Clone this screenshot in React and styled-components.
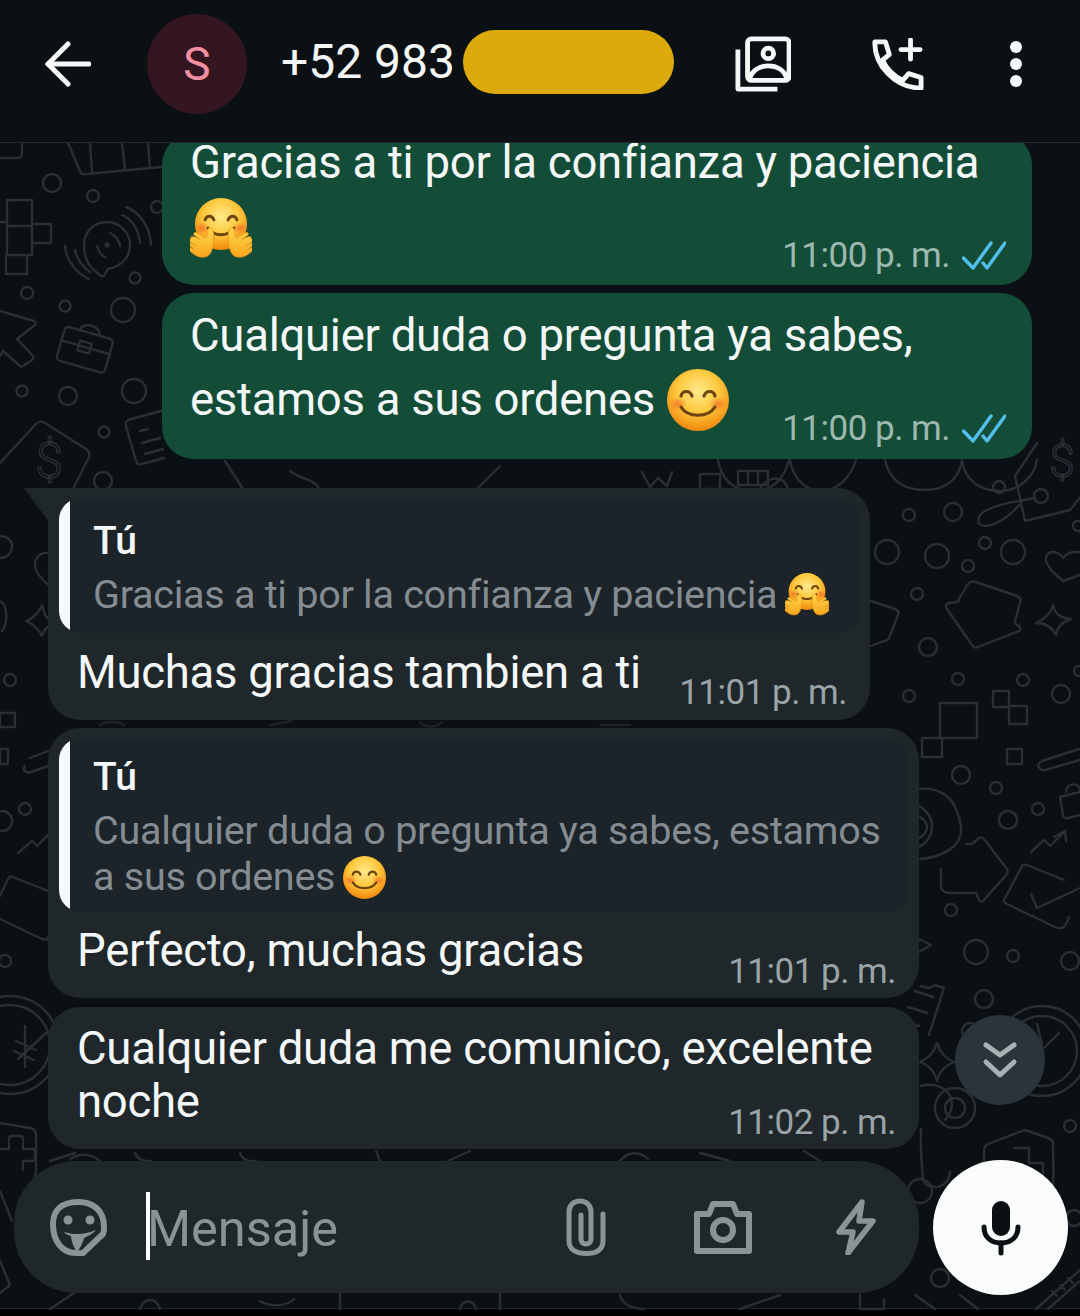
import React from "react";
import styled, { createGlobalStyle } from "styled-components";

const Global = createGlobalStyle`
  html, body { margin: 0; padding: 0; background: #000; }
  body { font-family: Roboto, "Liberation Sans", sans-serif; }
  * { box-sizing: border-box; }
`;

const Page = styled.div`
  width: 1080px;
  height: 1316px;
  display: flex;
  flex-direction: column;
  overflow: hidden;
  background: #0b1014;
`;

const Header = styled.header`
  position: relative;
  z-index: 2;
  flex: 0 0 143px;
  height: 143px;
  padding: 0 48px 14px 45px;
  display: flex;
  align-items: center;
  background: #0b1014;
  border-bottom: 1px solid #22282c;
`;

const Avatar = styled.div`
  width: 100px;
  height: 100px;
  margin-left: 56px;
  border-radius: 50%;
  background: #33161f;
  color: #f48fa3;
  font-size: 46px;
  display: flex;
  align-items: center;
  justify-content: center;
`;

const Phone = styled.div`
  margin-left: 34px;
  margin-top: -4px;
  color: #f4f6f6;
  font-size: 48px;
  font-weight: 400;
  line-height: 1;
`;

const Redact = styled.div`
  width: 211px;
  height: 64px;
  margin-left: 8px;
  margin-top: -4px;
  border-radius: 32px;
  background: #dcaa0c;
`;

const HeaderIcon = styled.svg`
  display: block;
  flex: none;
  margin-left: ${(p) => p.$left || 0}px;
`;

const Chat = styled.main`
  position: relative;
  flex: 1;
  min-height: 0;
  display: flex;
  flex-direction: column;
  justify-content: flex-end;
`;

const Doodles = styled.svg`
  position: absolute;
  inset: 0;
  width: 1080px;
  height: 1173px;
  fill: none;
  stroke: #2a2f33;
  stroke-width: 2.4;
  stroke-linecap: round;
  stroke-linejoin: round;
`;

const Messages = styled.div`
  position: relative;
  display: flex;
  flex-direction: column;
  flex: none;
`;

const Bubble = styled.div`
  position: relative;
  flex: none;
  width: ${(p) => p.$width}px;
  margin-top: ${(p) => p.$gap || 0}px;
  align-self: ${(p) => (p.$out ? "flex-end" : "flex-start")};
  margin-right: ${(p) => (p.$out ? 48 : 0)}px;
  margin-left: ${(p) => (p.$out ? 0 : 48)}px;
  padding: ${(p) => p.$pad || "10px 10px 0 11px"};
  border-radius: 32px;
  background: ${(p) => (p.$out ? "#134d37" : "#1f272a")};
  color: #f4f7f7;
  ${(p) => p.$tail && "border-top-left-radius: 0;"}
  &::before {
    content: ${(p) => (p.$tail ? '""' : "none")};
    position: absolute;
    top: 0;
    left: -24px;
    width: 25px;
    height: 34px;
    background: #1f272a;
    clip-path: polygon(0 0, 100% 0, 100% 100%);
  }
`;

const Stack = styled.div`
  display: grid;
`;

const Body = styled.div`
  grid-area: 1 / 1;
  font-size: 45.5px;
  line-height: ${(p) => p.$line || 53}px;
  letter-spacing: -0.27px;
  padding: ${(p) => p.$pad || "0"};
  min-height: ${(p) => p.$min || 0}px;
`;

const Line = styled.div`
  white-space: nowrap;
  height: ${(p) => (p.$height ? `${p.$height}px` : "auto")};
  display: flex;
  align-items: center;
  gap: 12px;
`;

const Meta = styled.div`
  grid-area: 1 / 1;
  justify-self: end;
  align-self: end;
  display: flex;
  align-items: center;
  gap: 12px;
  color: ${(p) => (p.$out ? "#9db8ae" : "#9aa3a6")};
  font-size: 35px;
  letter-spacing: -0.5px;
  line-height: 40px;
  white-space: nowrap;
  margin: ${(p) => p.$margin || "0"};
`;

const Quote = styled.div`
  position: relative;
  height: ${(p) => p.$height}px;
  padding: ${(p) => p.$top}px 24px 0 34px;
  border-radius: 22px;
  background: #1c2329;
  overflow: hidden;
  &::before {
    content: "";
    position: absolute;
    left: 0;
    top: 0;
    bottom: 0;
    width: 11px;
    background: #f8f9fa;
  }
`;

const QuoteName = styled.div`
  color: #f4f7f7;
  font-size: 39px;
  font-weight: 500;
  line-height: 46px;
  margin-bottom: 8px;
`;

const QuoteText = styled.div`
  color: #848c92;
  font-size: 39.6px;
  letter-spacing: -0.29px;
  line-height: 46px;
  display: flex;
  align-items: center;
  gap: 8px;
  white-space: nowrap;
`;

const Footer = styled.div`
  position: relative;
  flex: none;
  height: 159px;
  padding: 11px 12px 0 14px;
  display: flex;
  align-items: flex-start;
  justify-content: space-between;
`;

const Composer = styled.div`
  width: 905px;
  height: 132px;
  margin-top: 1px;
  padding: 0 43px 0 36px;
  border-radius: 62px;
  background: #1f272a;
  display: flex;
  align-items: center;
`;

const Caret = styled.div`
  width: 4px;
  height: 68px;
  margin-left: 39px;
  margin-top: -2px;
  background: #fff;
`;

const Placeholder = styled.div`
  margin-left: -3px;
  color: #8a9497;
  font-size: 50.5px;
  line-height: 1;
  margin-top: 4px;
`;

const MicButton = styled.button`
  width: 135px;
  height: 135px;
  padding: 0;
  border: 0;
  border-radius: 50%;
  background: #fafbfb;
  display: flex;
  align-items: center;
  justify-content: center;
`;

const ScrollDown = styled.button`
  position: absolute;
  left: 955px;
  top: 872px;
  width: 90px;
  height: 90px;
  padding: 0;
  border: 0;
  border-radius: 50%;
  background: #2a343a;
  display: flex;
  align-items: center;
  justify-content: center;
`;

const BottomBar = styled.div`
  flex: 0 0 8px;
  background: #000;
  border-top: 1px solid #22282c;
`;

function BackIcon() {
  return (
    <HeaderIcon width="46" height="46" viewBox="0 0 46 46" fill="none" stroke="#f6f7f7" strokeWidth="5" strokeLinecap="round" strokeLinejoin="round">
      <path d="M3 23h41" />
      <path d="M23 3 3 23l20 20" />
    </HeaderIcon>
  );
}

function ContactsIcon() {
  return (
    <HeaderIcon $left={61} width="56" height="56" viewBox="0 0 58 58" fill="none" stroke="#f6f7f7" strokeWidth="5" strokeLinecap="round" strokeLinejoin="round">
      <rect x="13" y="3" width="43" height="43" rx="4" />
      <circle cx="34.5" cy="18" r="5.5" />
      <path d="M15 44c3-9 11-13 19.500-13S51 35 54 44" />
      <path d="M3 14v41h41" strokeLinecap="butt" strokeLinejoin="round" />
    </HeaderIcon>
  );
}

function CallAddIcon() {
  return (
    <HeaderIcon $left={81} width="52" height="52" viewBox="0 0 54 54" fill="none" stroke="#f6f7f7" strokeWidth="5" strokeLinecap="round" strokeLinejoin="round">
      <path d="M3 4h11l4 13-7 6c4 9 11 16 21 21l6-7 13 4v11C24 52 2 28 3 4Z" />
      <path d="M40 2v20M30 12h20" />
    </HeaderIcon>
  );
}

function DotsIcon() {
  return (
    <HeaderIcon $left={84} width="16" height="48" viewBox="0 0 16 48" fill="#f6f7f7">
      <circle cx="8" cy="7" r="6" />
      <circle cx="8" cy="24" r="6" />
      <circle cx="8" cy="41" r="6" />
    </HeaderIcon>
  );
}

function Ticks() {
  return (
    <svg width="44" height="30" viewBox="0 0 44 30" fill="none" stroke="#53bdeb" strokeWidth="3.4" strokeLinecap="round" strokeLinejoin="round">
      <path d="M1.500 17 11 27 29 2" />
      <path d="M21 22l4 5L43 2" />
    </svg>
  );
}

function EmojiDefs() {
  return (
    <defs>
      <radialGradient id="face" cx="50%" cy="36%" r="62%">
        <stop offset="0" stopColor="#ffe98c" />
        <stop offset="0.55" stopColor="#fdc83c" />
        <stop offset="1" stopColor="#f28c10" />
      </radialGradient>
      <radialGradient id="cheek" cx="50%" cy="50%" r="50%">
        <stop offset="0" stopColor="#f4622a" stopOpacity="0.7" />
        <stop offset="1" stopColor="#f4622a" stopOpacity="0" />
      </radialGradient>
      <linearGradient id="hand" x1="0" y1="0" x2="0" y2="1">
        <stop offset="0" stopColor="#ffd84e" />
        <stop offset="1" stopColor="#f9a51c" />
      </linearGradient>
    </defs>
  );
}

function SmileEmoji({ size }) {
  return (
    <svg width={size} height={size} viewBox="0 0 62 62" style={{ flex: "none" }}>
      <EmojiDefs />
      <circle cx="31" cy="31" r="31" fill="url(#face)" />
      <ellipse cx="11" cy="35" rx="9" ry="7" fill="url(#cheek)" />
      <ellipse cx="51" cy="35" rx="9" ry="7" fill="url(#cheek)" />
      <g fill="none" stroke="#6d4412" strokeWidth="3.200" strokeLinecap="round">
        <path d="M14 27c1.500-6 9-6 11 0" />
        <path d="M37 27c2-6 9.500-6 11 0" />
        <path d="M14 38c7 11 27 11 34 0" />
      </g>
    </svg>
  );
}

function HugEmoji({ size }) {
  return (
    <svg width={size} height={size} viewBox="0 0 62 62" style={{ flex: "none" }}>
      <EmojiDefs />
      <ellipse cx="31" cy="26" rx="26" ry="26" fill="url(#face)" />
      <ellipse cx="12" cy="30" rx="8" ry="6" fill="url(#cheek)" />
      <ellipse cx="50" cy="30" rx="8" ry="6" fill="url(#cheek)" />
      <g fill="none" stroke="#6d4412" strokeWidth="2.800" strokeLinecap="round">
        <path d="M15 22c1.500-5 7-5 9 0" />
        <path d="M38 22c2-5 7.500-5 9 0" />
        <path d="M18 30c6 9 20 9 26 0" />
      </g>
      <g fill="url(#hand)" stroke="#ee9a1c" strokeWidth="0.800">
        <path d="M1 39c3-1 6 1 9 2l-6-4c-1-2 1-3 3-2l8 5c2 0 3-5 3-9 1-2 4-1 5 1 1 4 1 10 0 15-1 7-4 12-9 12-6 1-11-3-15-7-1-2 1-3 3-2l3 2-6-5c-1-2 1-3 2-2l5 3-7-5c-1-2 0-3 2-2Z" />
        <path d="M61 39c-3-1-6 1-9 2l6-4c1-2-1-3-3-2l-8 5c-2 0-3-5-3-9-1-2-4-1-5 1-1 4-1 10 0 15 1 7 4 12 9 12 6 1 11-3 15-7 1-2-1-3-3-2l-3 2 6-5c1-2-1-3-2-2l-5 3 7-5c1-2 0-3-2-2Z" />
      </g>
    </svg>
  );
}

function StickerIcon() {
  return (
    <svg width="57" height="57" viewBox="0 0 57 57" fill="none" stroke="#8a9497" strokeWidth="6" strokeLinejoin="round" strokeLinecap="round" style={{ flex: "none" }}>
      <path d="M3 25C3 11 12 3 28 3s26 9 26 25c0 3-.5 6-1 7L33 54c-2 .5-4 0-7 0C12 54 3 42 3 25Z" />
      <path d="M14 33c9 3 21 3 32-2-2 3-8 6-12 8-1 4-4 11-7 14-4-5-6-13-6-16-3-1-6-2-7-4Z" fill="#8a9497" stroke="none" />
      <circle cx="18" cy="21" r="4.500" fill="#8a9497" stroke="none" />
      <circle cx="40" cy="21" r="4.500" fill="#8a9497" stroke="none" />
    </svg>
  );
}

function ClipIcon() {
  return (
    <svg width="40" height="58" viewBox="0 0 40 58" fill="none" stroke="#8a9497" strokeWidth="5" strokeLinecap="round" style={{ flex: "none", marginLeft: "auto" }}>
      <path d="M37 16v27c0 9-7 12.500-16.500 12.500S3 52 3 43V14C3 7 8 3 14 3s11 4 11 11v27c0 3-2 5-5 5s-5-2-5-5V17" />
    </svg>
  );
}

function CameraIcon() {
  return (
    <svg width="58" height="54" viewBox="0 0 58 54" fill="none" stroke="#8a9497" strokeWidth="6" strokeLinejoin="round" style={{ flex: "none", marginLeft: 88 }}>
      <path d="M3 14h12l4-10h20l4 10h12v37H3Z" />
      <circle cx="29" cy="30" r="10" />
    </svg>
  );
}

function BoltIcon() {
  return (
    <svg width="40" height="56" viewBox="0 0 40 56" fill="none" stroke="#8a9497" strokeWidth="5.500" strokeLinejoin="round" style={{ flex: "none", marginLeft: 84 }}>
      <path d="M26 3 3 33h14l-5 21 25-32H23Z" />
    </svg>
  );
}

function MicIcon() {
  return (
    <svg width="40" height="56" viewBox="0 0 40 56" fill="none" stroke="#0b1014" strokeWidth="5" strokeLinecap="round">
      <rect x="11" y="1" width="18" height="35" rx="9" fill="#0b1014" stroke="none" />
      <path d="M3 27c0 10 7 16 17 16s17-6 17-16" />
      <path d="M20 43v10" />
    </svg>
  );
}

function ChevronsIcon() {
  return (
    <svg width="36" height="38" viewBox="0 0 36 38" fill="none" stroke="#a7b0b2" strokeWidth="5" strokeLinecap="round" strokeLinejoin="round">
      <path d="M4 4l14 10L32 4" />
      <path d="M4 21l14 13 14-13" />
    </svg>
  );
}

const rings = [
  [52, 182, 9], [93, 195, 6], [157, 206, 6], [27, 292, 6], [65, 305, 5.5], [123, 309, 12], [135, 277, 5.5],
  [22, 390, 5.5], [68, 395, 9], [134, 390, 12], [104, 431, 5.5], [103, 480, 9], [999, 486, 6], [909, 514, 6],
  [953, 511, 9], [887, 551, 12], [937, 555, 12], [985, 542, 6], [968, 565, 6], [1013, 551, 12], [917, 593, 6],
  [928, 646, 9], [958, 678, 6], [1023, 679, 6], [1061, 693, 9], [909, 695, 6], [961, 774, 9], [996, 787, 6],
  [1038, 808, 6], [1008, 819, 9], [951, 909, 6], [976, 951, 12], [1013, 955, 6], [1070, 960, 9], [984, 998, 9],
  [970, 1030, 8], [1070, 1125, 6], [920, 1190, 12], [1074, 1217, 8], [940, 1277, 9], [25, 808, 6], [10, 679, 6],
  [1078, 525, 5], [955, 1107, 20], [955, 1107, 10], [2, 820, 10], [5, 960, 6], [1079, 670, 5],
];

function ChatDoodles() {
  return (
    <Doodles viewBox="0 142 1080 1173">
      {rings.map(([cx, cy, r], i) => (
        <circle key={i} cx={cx} cy={cy} r={r} />
      ))}
      {/* top left tiles */}
      <path d="M0 157h18c3 0 4-2 4-5v-10M68 142l12 28c1 3 3 4 6 3l75-7M92 172l-2-30M125 168l-3-26M150 166l-2-24" />
      <path d="M7 199h25v26H7zM7 225h25v29H7zM32 223h19v19H32zM6 254h21v19H6zM0 221h7" />
      {/* chat bubble with waves */}
      <path d="M101 275c-5-5-17-10-17-31 0-13 10-23 23-23s23 11 23 23c0 15-12 22-22 24l-4 7Z" />
      <path d="M97 245c2 7 5 10 8 11M110 232c4 2 9 6 10 13" />
      <circle cx="107" cy="244" r="1.500" />
      <path d="M65 245c1 14 12 28 24 33M75 249c2 9 8 17 15 22M126 206c14 5 24 20 25 38M122 214c10 4 17 15 18 28" />
      {/* cursor */}
      <path d="M0 310l34 10c2 1 2 3 1 4L17 338l16 17c1 1 0 3-1 4l-9 6c-1 1-2 1-3 0L3 350l-3 5" />
      {/* briefcase */}
      <g transform="rotate(16 84 348)">
        <rect x="60" y="331" width="50" height="35" rx="4" />
        <path d="M75 331c0-10 20-10 20 0M60 346h50" />
        <rect x="78" y="341" width="12" height="10" />
      </g>
      {/* dollar card */}
      <path d="M0 462l36-39c3-3 6-3 9-1l41 26c3 2 4 5 3 8l-17 34" />
      <text x="49" y="477" fontFamily="Roboto, sans-serif" fontSize="50" fontWeight="300" textAnchor="middle" fill="none" stroke="#2a2f33" strokeWidth="1.500">$</text>
      <text x="1062" y="476" fontFamily="Roboto, sans-serif" fontSize="46" fontWeight="300" textAnchor="middle" fill="none" stroke="#2a2f33" strokeWidth="1.500">$</text>
      {/* receipt */}
      <path d="M165 409l-34 9c-4 1-6 3-5 7l10 35c1 3 3 4 6 3l22-6M140 430l8-2M142 442l18-5M145 453l18-5" />
      {/* tag and loop */}
      <path d="M1037 442l-22 33 10 45 45-11 12-15M1035 497c-15 3-35 5-48 12-9 4-11 12-6 15 8 4 27-6 38-20M1041 495m-7 0a7 7 0 1 0 14 0a7 7 0 1 0-14 0" />
      {/* heart and sparkle */}
      <path d="M1063 580c-9-8-15-13-17-20-1-5 2-9 7-9 4 0 8 3 10 6 2-3 7-6 11-6h6M1080 574l-17 6" />
      <path d="M48 552c-6-1-12 3-13 10-1 6 3 12 13 22" />
      <path d="M12 545c0-6-5-10-12-10M0 557c7 0 12-5 12-12" />
      <path d="M1053 604c2 9 7 13 18 14-9 3-14 8-15 16-4-8-11-12-20-12 9-4 15-9 17-18Z" />
      <path d="M42 604c2 9 4 12 6 14M48 626c-3 2-5 5-6 9-3-6-8-12-16-15 8-3 13-9 16-16" />
      <path d="M0 600c8 4 8 22 2 30" />
      {/* mitten */}
      <path d="M968 583c2-2 5-3 8-2l41 14c3 1 4 4 3 7l-5 18c-1 3 2 4 4 5 2 2 2 4 0 5l-41 16c-3 1-5 0-6-2l-25-36c-2-3-1-5 2-6l7-1c2 0 3-1 3-3Z" />
      {/* small tag behind bubble */}
      <path d="M871 600l24 8c3 1 4 3 3 6l-9 23c-1 2-3 3-5 3l-13 5" />
      {/* squares */}
      <path d="M940 702h37v35h-37zM922 737h20v19h-20zM993 690h16v16h-16zM1009 705h18v18h-18zM1007 748h15v15h-15z" />
      <path d="M0 712h15v14H0zM0 748h8v15H0z" />
      {/* pill and lock */}
      <path d="M1079 748l-37 12c-7 3-3 10 3 9l35-10M25 765c-3 3 0 8 6 6l17-6M48 750l-18 7" />
      <path d="M1066 791c0-10 14-10 14-1M1060 796l20-5M1060 796l3 18c0 3 3 4 5 3l12-3" />
      {/* trend */}
      <path d="M1031 851l13-12 6 6 15-15M1054 836l11-6 1 10M18 852l14-12 5 5 12-12" />
      {/* envelope */}
      <path d="M1064 879l-37-15c-3-1-5 0-6 3l-16 30c-2 3-1 5 2 6l48 23c5 2 9 1 11-3l3-7M1031 893l6 14 43-20M0 895l8-17c1-2 3-3 5-2l35 14M0 918l42 20c3 1 6 1 6-2" />
      {/* ear */}
      <path d="M920 788c15-2 29 5 35 18 4 8 6 17 6 24 0 15-18 26-41 28M919 805c8 4 13 12 13 20s-4 16-13 21M919 815c6 4 8 7 8 11s-2 8-8 11" />
      {/* house arrow */}
      <path d="M966 843h6l7-6c2-1 3-1 5 1l23 30c1 2 1 3 0 5l-24 27c-1 1-3 1-4-1l-3-7h-26c-6 0-9-3-9-8v-16" />
      {/* ticket behind last bubble */}
      <path d="M921 985l8 2 6-3 9 3-15 47M915 990l18 6M908 1006l19 6M905 1020l14 5" />
      {/* small triangle */}
      <path d="M919 938l12 6-12 7" />
      {/* star */}
      <path d="M937 1042c3 9 7 14 17 19-10 4-14 9-17 19-3-10-7-15-17-19 10-5 14-10 17-19Z" />
      {/* clock */}
      <circle cx="1042" cy="1050" r="45" />
      <circle cx="1042" cy="1050" r="35" />
      <path d="M1037 1023l5 20M1059 1032l-15 15" />
      {/* coin */}
      <circle cx="10" cy="1044" r="49" />
      <circle cx="10" cy="1044" r="40" />
      <path d="M25 1025v41M46 1032l-28 26M16 1040l20 9M14 1050l20 9" />
      {/* ear ring bottom */}
      <path d="M921 1085c10-3 25 0 29 10 3 8 3 15-5 24M921 1128c-1 18 1 39 2 50 1 5 6 8 13 8s13-6 14-15" />
      {/* shield and plus */}
      <path d="M984 1192v-43c0-3 2-5 4-6l34-13c2-1 4-1 6 0l20 7c3 1 5 3 5 6 0 20 2 38-2 58" />
      <path d="M1014 1147h15v15h14v14h-14" />
      <path d="M0 1122l30 5c4 1 6 3 6 6v31c0 9-1 18-4 26" />
      <path d="M0 1148h9v-10c0-2 1-3 3-3h8c2 0 3 1 3 3v10h9c2 0 3 1 3 3v6c0 2-1 3-3 3h-9v9" />
      {/* ruler */}
      <path d="M1036 1308l44-39M1048 1308l32-28M1052 1290l5 5M1060 1284l5 5M1068 1277l5 5M0 1190l12 30M0 1260l10 24-10 8" />
      {/* bits between bubbles */}
      <path d="M885 459c5 22 20 30 40 30s34-10 37-30M962 459c3 22 20 31 38 31s34-13 37-31" />
      <path d="M718 459c4 22 18 31 35 31s30-8 36-31M790 459c4 22 18 31 32 31s28-12 34-31" />
      <path d="M738 470h30v14h-30zM748 470v14M758 470v14" />
      <path d="M642 471l8 15 8-9 9 8 5-14M700 488v-15h20v15M725 488h-28M760 488c8-14 24-14 28 0" />
      <path d="M290 470c10 8 24 8 30 18M500 465l-24 24M225 460l18 28" />
      <path d="M270 724l22-4M600 724h30M420 721c4 6 16 6 22 0M100 724c6-4 18-4 24 0" opacity="0.6" />
      <path d="M50 1160l25-8M70 1158c10-6 20-6 30 2M135 1152c2 6 10 9 16 8M240 1152c2 6 8 9 16 8M380 1160l-4-10M470 1150l-22 10M620 1160c8-10 20-10 28-2M700 1152l30 8M820 1160l-16-10" />
      <path d="M50 1308l24-16M140 1308c4-12 16-12 20 0M260 1300c10 6 26 6 34-2M340 1308v-16M460 1308c2-10 14-10 16 0M500 1292v16M620 1294c2 10 14 14 24 14M780 1294l-40 14M860 1294v14h24v-10M915 1294l20 14M960 1294l18 14" />
    </Doodles>
  );
}

export default function App() {
  return (
    <Page>
      <Global />
      <Header>
        <BackIcon />
        <Avatar>S</Avatar>
        <Phone>+52 983</Phone>
        <Redact />
        <ContactsIcon />
        <CallAddIcon />
        <DotsIcon />
      </Header>
      <Chat>
        <ChatDoodles />
        <Messages>
          <Bubble $out $width={870} $pad="10px 26px 10px 28px">
            <Stack>
              <Body $line={40}>
                <Line>Gracias a ti por la confianza y paciencia</Line>
                <Line $height={92}><HugEmoji size={62} /></Line>
              </Body>
              <Meta $out $margin="0 0 -1px 0">11:00 p. m. <Ticks /></Meta>
            </Stack>
          </Bubble>
          <Bubble $out $width={870} $gap={8} $pad="11px 26px 27px 28px">
            <Stack>
              <Body $line={64}>
                <Line>Cualquier duda o pregunta ya sabes,</Line>
                <Line>estamos a sus ordenes <SmileEmoji size={62} /></Line>
              </Body>
              <Meta $out $margin="0 0 -17px 0">11:00 p. m. <Ticks /></Meta>
            </Stack>
          </Bubble>
          <Bubble $tail $width={822} $gap={29}>
            <Quote $height={135} $top={20}>
              <QuoteName>Tú</QuoteName>
              <QuoteText>Gracias a ti por la confianza y paciencia <HugEmoji size={44} /></QuoteText>
            </Quote>
            <Stack>
              <Body $line={53} $pad="13px 0 0 18px" $min={87}>Muchas gracias tambien a ti</Body>
              <Meta $margin="0 13px 7px 0">11:01 p. m.</Meta>
            </Stack>
          </Bubble>
          <Bubble $width={871} $gap={8}>
            <Quote $height={174} $top={16}>
              <QuoteName>Tú</QuoteName>
              <QuoteText>Cualquier duda o pregunta ya sabes, estamos</QuoteText>
              <QuoteText>a sus ordenes <SmileEmoji size={43} /></QuoteText>
            </Quote>
            <Stack>
              <Body $line={53} $pad="12px 0 0 18px" $min={86}>Perfecto, muchas gracias</Body>
              <Meta $margin="0 13px 6px 0">11:01 p. m.</Meta>
            </Stack>
          </Bubble>
          <Bubble $width={871} $gap={9}>
            <Stack>
              <Body $line={53} $pad="5px 0 0 18px" $min={132}>
                <Line>Cualquier duda me comunico, excelente</Line>
                <Line>noche</Line>
              </Body>
              <Meta $margin="0 13px 6px 0">11:02 p. m.</Meta>
            </Stack>
          </Bubble>
        </Messages>
        <Footer>
          <Composer>
            <StickerIcon />
            <Caret />
            <Placeholder>Mensaje</Placeholder>
            <ClipIcon />
            <CameraIcon />
            <BoltIcon />
          </Composer>
          <MicButton aria-label="Grabar">
            <MicIcon />
          </MicButton>
        </Footer>
        <ScrollDown aria-label="Bajar">
          <ChevronsIcon />
        </ScrollDown>
      </Chat>
      <BottomBar />
    </Page>
  );
}
